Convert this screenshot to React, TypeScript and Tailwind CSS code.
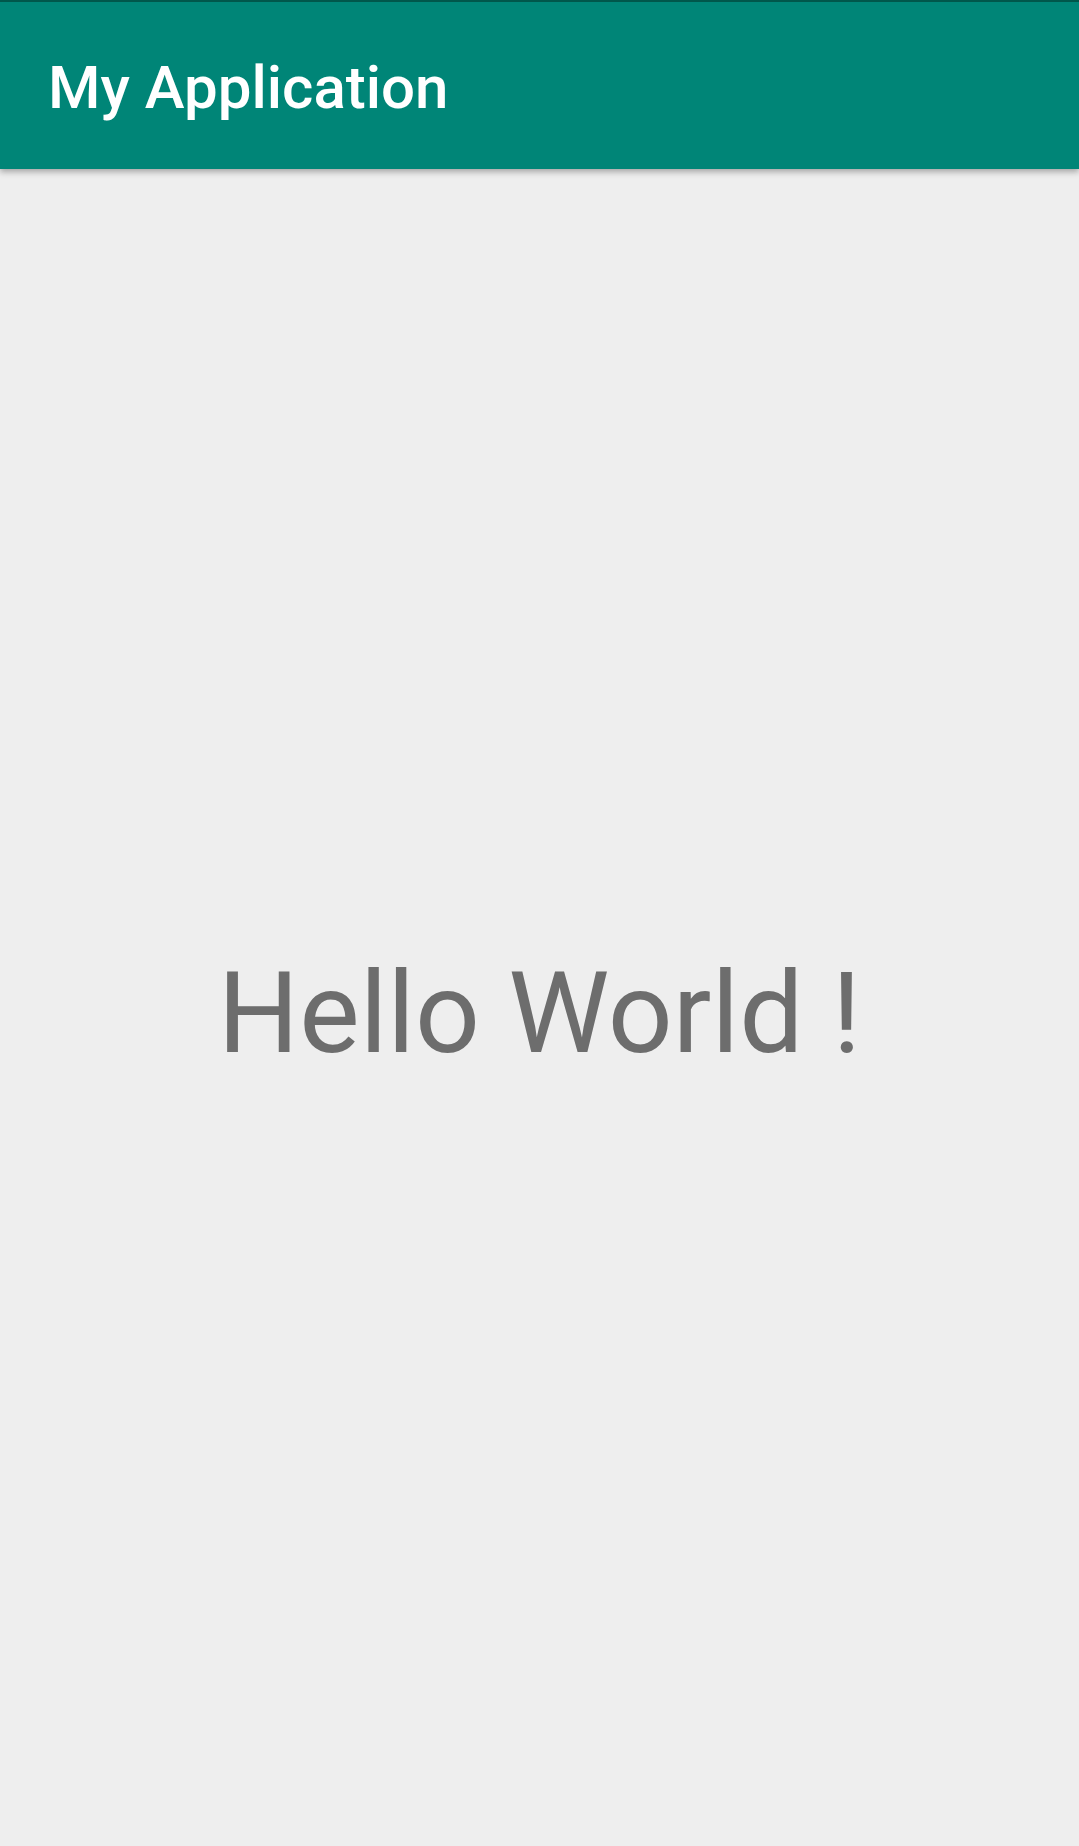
import React from "react";

export default function App() {
  return (
    <div
      className="flex h-[1846px] w-full flex-col bg-[#eeeeee]"
      style={{ fontFamily: "Roboto, 'Noto Sans', sans-serif" }}
    >
      <header className="relative z-10 h-[169px] w-full shrink-0 border-t-2 border-[#00574b] bg-[#008577] shadow-[0_3px_6px_rgba(0,0,0,0.3)]">
        <div className="flex h-full items-center pl-[48px] pt-[4px]">
          <h1 className="text-[60px] font-medium leading-none text-white">My Application</h1>
        </div>
      </header>
      <main className="flex flex-1 items-center justify-center pt-[10px]">
        <p className="text-[114px] leading-none text-[#6d6d6d]">Hello World !</p>
      </main>
    </div>
  );
}
